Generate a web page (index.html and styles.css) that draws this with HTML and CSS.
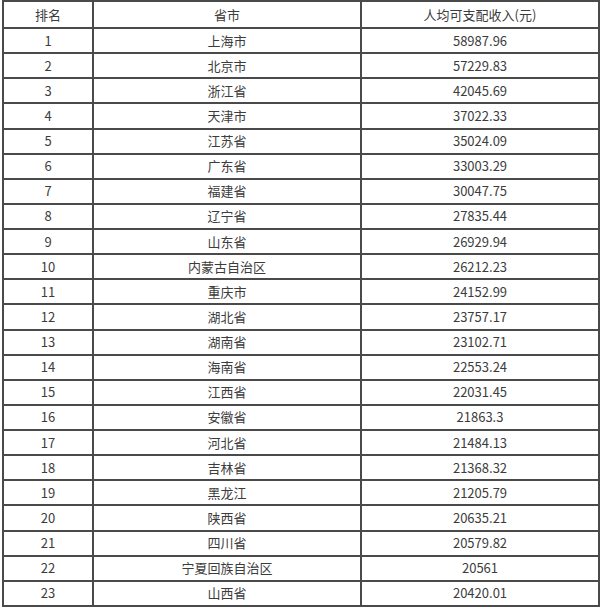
FILE: index.html
```html
<!DOCTYPE html>
<html lang="zh-CN">
<head>
<meta charset="utf-8">
<title>人均可支配收入排名</title>
<link rel="stylesheet" href="styles.css">
</head>
<body>
<table class="rank">
<colgroup><col class="c1"><col class="c2"><col class="c3"></colgroup>
<thead>
<tr><th>排名</th><th>省市</th><th>人均可支配收入(元)</th></tr>
</thead>
<tbody>
<tr><td>1</td><td>上海市</td><td>58987.96</td></tr>
<tr><td>2</td><td>北京市</td><td>57229.83</td></tr>
<tr><td>3</td><td>浙江省</td><td>42045.69</td></tr>
<tr><td>4</td><td>天津市</td><td>37022.33</td></tr>
<tr><td>5</td><td>江苏省</td><td>35024.09</td></tr>
<tr><td>6</td><td>广东省</td><td>33003.29</td></tr>
<tr><td>7</td><td>福建省</td><td>30047.75</td></tr>
<tr><td>8</td><td>辽宁省</td><td>27835.44</td></tr>
<tr><td>9</td><td>山东省</td><td>26929.94</td></tr>
<tr><td>10</td><td>内蒙古自治区</td><td>26212.23</td></tr>
<tr><td>11</td><td>重庆市</td><td>24152.99</td></tr>
<tr><td>12</td><td>湖北省</td><td>23757.17</td></tr>
<tr><td>13</td><td>湖南省</td><td>23102.71</td></tr>
<tr><td>14</td><td>海南省</td><td>22553.24</td></tr>
<tr><td>15</td><td>江西省</td><td>22031.45</td></tr>
<tr><td>16</td><td>安徽省</td><td>21863.3</td></tr>
<tr><td>17</td><td>河北省</td><td>21484.13</td></tr>
<tr><td>18</td><td>吉林省</td><td>21368.32</td></tr>
<tr><td>19</td><td>黑龙江</td><td>21205.79</td></tr>
<tr><td>20</td><td>陕西省</td><td>20635.21</td></tr>
<tr><td>21</td><td>四川省</td><td>20579.82</td></tr>
<tr><td>22</td><td>宁夏回族自治区</td><td>20561</td></tr>
<tr><td>23</td><td>山西省</td><td>20420.01</td></tr>
</tbody>
</table>
</body>
</html>
```
FILE: styles.css
```css
html, body {
  margin: 0;
  padding: 0;
  background: #ffffff;
}
body {
  font-family: "Noto Sans CJK SC", "Noto Sans", sans-serif;
  font-size: 13px;
  color: #3c3c3c;
}
.rank {
  border-collapse: collapse;
  margin-left: 2px;
  width: 596px;
  table-layout: fixed;
}
.c1 { width: 90px; }
.c2 { width: 268px; }
.c3 { width: 238px; }
.rank th,
.rank td {
  border: 2px solid #4a4a4a;
  padding: 0;
  text-align: center;
  vertical-align: middle;
  font-weight: normal;
  line-height: 16px;
}
.rank th {
  height: 25px;
}
.rank td {
  height: 23.13px;
}
```
